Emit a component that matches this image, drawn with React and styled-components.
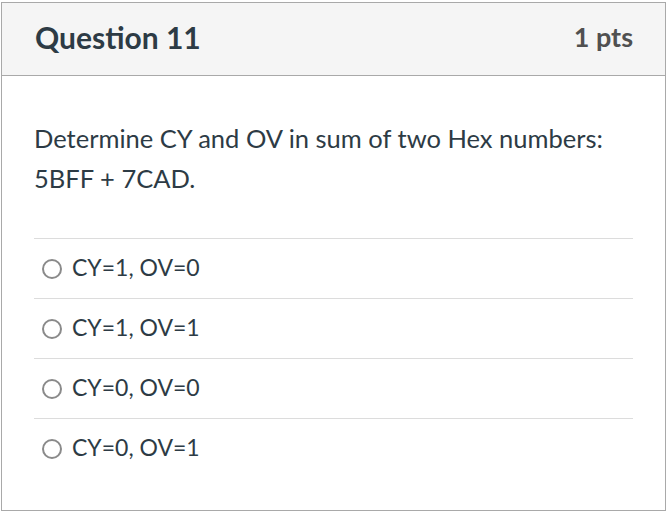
import React from 'react';
import styled, { createGlobalStyle } from 'styled-components';

const GlobalStyle = createGlobalStyle`
  body {
    margin: 0;
    background: #ffffff;
    font-family: Lato, "Liberation Sans", sans-serif;
  }
`;

const Card = styled.div`
  box-sizing: border-box;
  width: 665px;
  height: 509px;
  margin: 2px 0 0 1px;
  border: 1px solid #a9a9a9;
  background: #ffffff;
`;

const Header = styled.div`
  display: flex;
  align-items: center;
  justify-content: space-between;
  padding: 16px 32px 20px 33px;
  background: #f5f5f5;
  border-bottom: 1px solid #a9a9a9;
`;

const Title = styled.h2`
  margin: 0;
  font-size: 30px;
  font-weight: 700;
  line-height: 36px;
  color: #2d3b45;
`;

const Points = styled.span`
  font-size: 27px;
  font-weight: 700;
  line-height: 32px;
  color: #505050;
`;

const Body = styled.div`
  padding: 42px 32px 30px 32px;
  color: #2d3b45;
`;

const Prompt = styled.p`
  margin: 0 0 40px;
  font-size: 25.5px;
  line-height: 40px;
`;

const Answers = styled.ul`
  list-style: none;
  margin: 0;
  padding: 0;
`;

const Answer = styled.li`
  display: flex;
  align-items: center;
  padding: 15px 0 18px 8px;
  border-top: 1px solid #dcdcdc;
  font-size: 23px;
  line-height: 26px;
`;

const Radio = styled.span`
  box-sizing: border-box;
  flex: none;
  width: 20px;
  height: 20px;
  margin: 4px 10px 0 0;
  border: 2px solid #8a8a8a;
  border-radius: 50%;
  background: #ffffff;
`;

const answers = ['CY=1, OV=0', 'CY=1, OV=1', 'CY=0, OV=0', 'CY=0, OV=1'];

export default function App() {
  return (
    <>
      <GlobalStyle />
      <Card>
        <Header>
          <Title>Question 11</Title>
          <Points>1 pts</Points>
        </Header>
        <Body>
          <Prompt>
            Determine CY and OV in sum of two Hex numbers:
            <br />
            5BFF + 7CAD.
          </Prompt>
          <Answers>
            {answers.map(a => (
              <Answer key={a}>
                <Radio />
                {a}
              </Answer>
            ))}
          </Answers>
        </Body>
      </Card>
    </>
  );
}
